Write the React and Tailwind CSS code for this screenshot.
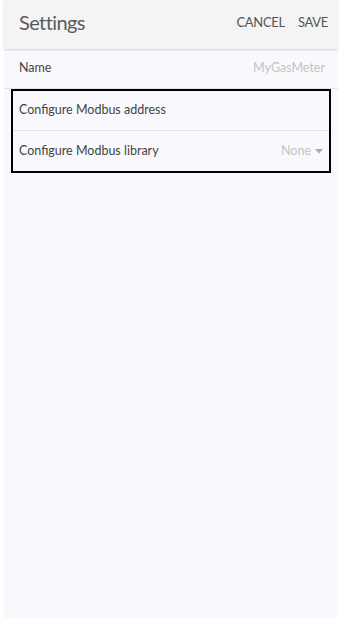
export default function App() {
  return (
    <div className="w-full h-[618px] bg-white px-[4px]" style={{ fontFamily: 'Lato, "Open Sans", sans-serif' }}>
      <div className="h-full bg-[#f9f9fd] flex flex-col">
        <div className="h-[49px] shrink-0 bg-[#f4f4f4] flex items-center justify-between pl-[15px] pr-[10px] pb-[5px] shadow-[0_1px_2px_rgba(0,0,0,0.15)] relative">
          <span className="text-[20px] text-[#5a5a5a] leading-none tracking-[-0.6px]">Settings</span>
          <div className="flex items-center gap-[13px] text-[13px] text-[#555] leading-none tracking-[-0.3px]">
            <span>CANCEL</span>
            <span>SAVE</span>
          </div>
        </div>
        <div className="h-[40px] shrink-0 flex items-center justify-between pl-[15px] pr-[13px] border-b border-[#e4e4e8] text-[12.5px]">
          <span className="text-[#444]">Name</span>
          <span className="text-[#c4c4c4]">MyGasMeter</span>
        </div>
        <div className="mx-[7px] border-2 border-black flex flex-col text-[12.5px]">
          <div className="h-[40px] flex items-center pl-[6px] border-b border-[#e4e4e8] text-[#444]">
            Configure Modbus address
          </div>
          <div className="h-[40px] flex items-center justify-between pl-[6px] pr-[6px]">
            <span className="text-[#444]">Configure Modbus library</span>
            <span className="flex items-center gap-[4px] text-[#c4c4c4]">
              None
              <svg width="8" height="5" viewBox="0 0 8 5"><path d="M0 0 L8 0 L4 4.5 Z" fill="#aaa" /></svg>
            </span>
          </div>
        </div>
      </div>
    </div>
  );
}
